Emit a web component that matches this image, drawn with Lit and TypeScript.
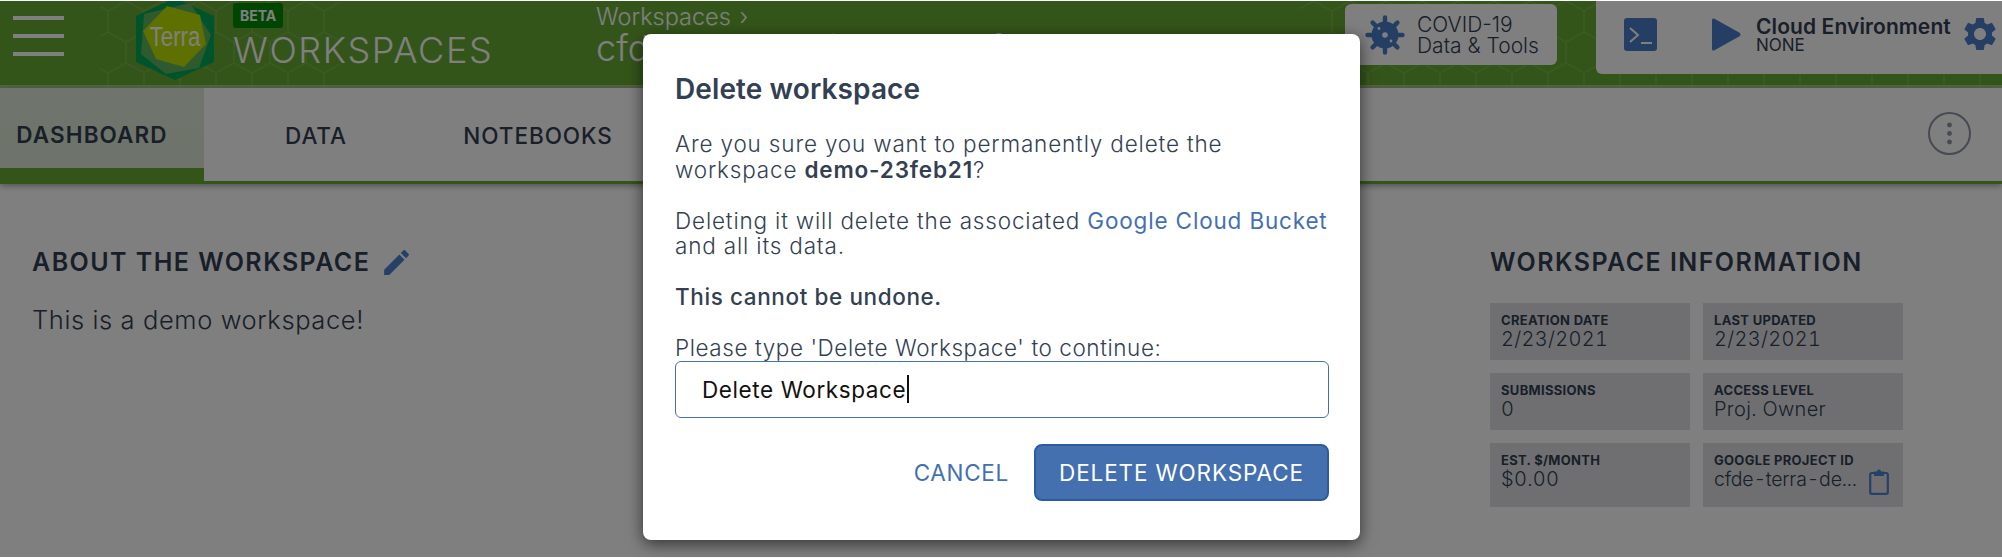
import { LitElement, css, html, svg } from "lit";
import { customElement } from "lit/decorators.js";

const tiles = [
  { label: "CREATION DATE", value: "2/23/2021" },
  { label: "LAST UPDATED", value: "2/23/2021" },
  { label: "SUBMISSIONS", value: "0" },
  { label: "ACCESS LEVEL", value: "Proj. Owner" },
  { label: "EST. $/MONTH", value: "$0.00" },
  { label: "GOOGLE PROJECT ID", value: "cfde-terra-de...", copy: true },
];

const gear = svg`<path d="M19.14 12.94c.04-.3.06-.61.06-.94 0-.32-.02-.64-.07-.94l2.03-1.58c.18-.14.23-.41.12-.61l-1.92-3.32c-.12-.22-.37-.29-.59-.22l-2.39.96c-.5-.38-1.03-.7-1.62-.94l-.36-2.54c-.04-.24-.24-.41-.48-.41h-3.84c-.24 0-.43.17-.47.41l-.36 2.54c-.59.24-1.13.57-1.62.94l-2.39-.96c-.22-.08-.47 0-.59.22L2.74 8.87c-.12.21-.08.47.12.61l2.03 1.58c-.05.3-.09.63-.09.94s.02.64.07.94l-2.03 1.58c-.18.14-.23.41-.12.61l1.92 3.32c.12.22.37.29.59.22l2.39-.96c.5.38 1.03.7 1.62.94l.36 2.54c.05.24.24.41.48.41h3.84c.24 0 .44-.17.47-.41l.36-2.54c.59-.24 1.13-.56 1.62-.94l2.39.96c.22.08.47 0 .59-.22l1.92-3.32c.12-.22.07-.47-.12-.61l-2.01-1.58zM12 15.6c-1.98 0-3.6-1.62-3.6-3.6s1.62-3.6 3.6-3.6 3.6 1.62 3.6 3.6-1.62 3.6-3.6 3.6z"/>`;

const hexPattern = svg`
  <defs>
    <pattern id="hex" width="36" height="62" patternUnits="userSpaceOnUse">
      <path d="M18 0 L36 10 V31 L18 41 L0 31 V10 Z M18 41 V62" fill="none" stroke="#fff" stroke-opacity="0.12" stroke-width="1.4"/>
    </pattern>
  </defs>
  <rect x="100" y="0" width="240" height="85" fill="url(#hex)"/>
  <rect x="1300" y="0" width="702" height="85" fill="url(#hex)"/>
`;

@customElement("app-root")
export class AppRoot extends LitElement {
  render() {
    return html`
      <div class="page">
        <header class="header">
          <svg class="pattern" width="2002" height="85">${hexPattern}</svg>
          <div class="menu"><span></span><span></span><span></span></div>
          <svg class="logo" width="78" height="80" viewBox="136 -1 78 80">
            <polygon points="175,-4 214,14 214,60 175,78 136,60 136,14" fill="#00a858"/>
            <polygon points="190,1 211,33 199,66 166,72 141,52 144,12" fill="#5fb25c"/>
            <polygon points="167,4 200,13 206,42 184,65 156,57 143,29" fill="#bce000"/>
            <text x="175" y="44" text-anchor="middle" class="logo-text" textLength="51" lengthAdjust="spacingAndGlyphs">Terra</text>
          </svg>
          <div class="brand">
            <span class="beta">BETA</span>
            <span class="title">WORKSPACES</span>
          </div>
          <div class="crumbs">
            <div class="crumb-top">Workspaces <span class="chev">›</span></div>
            <div class="crumb-name">cfde-terra-de/demo-23feb21</div>
          </div>
          <a class="covid">
            <svg width="40" height="40" viewBox="0 0 40 40" class="virus">
              <g stroke="#4a7cc8" stroke-width="4.4" stroke-linecap="round">
                <path d="M20 2.5V37.5M2.5 20H37.5M7.6 7.6L32.4 32.4M32.4 7.6L7.6 32.4"/>
              </g>
              <circle cx="20" cy="20" r="13.5" fill="#4a7cc8"/>
              <circle cx="20" cy="20" r="2.8" fill="#fff"/>
              <circle cx="14" cy="13.5" r="1.4" fill="#fff"/>
              <circle cx="26" cy="26" r="1.4" fill="#fff"/>
            </svg>
            <span class="covid-text">COVID-19<br />Data &amp; Tools</span>
          </a>
          <div class="cloud">
            <svg class="term" width="33" height="33" viewBox="0 0 33 33">
              <rect width="33" height="33" rx="3" fill="#4a7cc8"/>
              <path d="M6 10L14 17L6 24" fill="none" stroke="#fff" stroke-width="2"/>
              <path d="M17 25H28" stroke="#fff" stroke-width="2"/>
            </svg>
            <svg class="play" width="29" height="33" viewBox="0 0 29 33">
              <path d="M2 0.5 L28 15 Q29 16.5 28 18 L2 32.5 Q0 33 0 31 V2 Q0 0 2 0.5Z" fill="#4a7cc8"/>
            </svg>
            <div class="cloud-text">
              <div class="cloud-name">Cloud Environment</div>
              <div class="cloud-state">NONE</div>
            </div>
            <svg class="cog" width="40" height="40" viewBox="0 0 24 24" fill="#4a7cc8">${gear}</svg>
          </div>
        </header>

        <nav class="tabs">
          <a class="tab active">DASHBOARD</a>
          <a class="tab">DATA</a>
          <a class="tab">NOTEBOOKS</a>
          <span class="grow"></span>
          <svg class="kebab" width="43" height="43" viewBox="0 0 43 43">
            <circle cx="21.5" cy="21.5" r="20.5" fill="none" stroke="#8c94a4" stroke-width="2"/>
            <circle cx="21.5" cy="13" r="2.4" fill="#8c94a4"/>
            <circle cx="21.5" cy="21.5" r="2.4" fill="#8c94a4"/>
            <circle cx="21.5" cy="30" r="2.4" fill="#8c94a4"/>
          </svg>
        </nav>

        <main class="main">
          <section class="about">
            <h2 class="heading">
              ABOUT THE WORKSPACE
              <svg width="33" height="33" viewBox="0 0 24 24" fill="#4f82cc">
                <path d="M3 17.25V21h3.75L17.81 9.94l-3.75-3.75L3 17.25zM20.71 7.04c.39-.39.39-1.02 0-1.41l-2.34-2.34c-.39-.39-1.02-.39-1.41 0l-1.83 1.83 3.75 3.75 1.83-1.83z"/>
              </svg>
            </h2>
            <p class="desc">This is a demo workspace!</p>
          </section>
          <aside class="info">
            <h2 class="heading">WORKSPACE INFORMATION</h2>
            <div class="tiles">
              ${tiles.map(
                (t) => html`
                  <div class="tile">
                    <div class="tile-label">${t.label}</div>
                    <div class="tile-value ${t.copy ? "short" : ""}">${t.value}</div>
                    ${t.copy
                      ? html`<svg class="clip" width="20" height="26" viewBox="0 0 20 26">
                          <rect x="1.2" y="4" width="17.6" height="20.8" rx="1.5" fill="none" stroke="#4f82cc" stroke-width="2.2"/>
                          <path d="M5 2.5H8A2 2 0 0 1 12 2.5H15V7H5Z" fill="#4f82cc"/>
                        </svg>`
                      : ""}
                  </div>
                `
              )}
            </div>
          </aside>
        </main>

        <div class="overlay"></div>

        <div class="modal">
          <div class="modal-title">Delete workspace</div>
          <p class="line">
            Are you sure you want to permanently delete the<br />
            workspace <b>demo-23feb21</b>?
          </p>
          <p class="line gap">
            Deleting it will delete the associated
            <a class="link">Google Cloud Bucket</a><br />
            and all its data.
          </p>
          <p class="line gap strong">This cannot be undone.</p>
          <p class="line gap prompt">Please type 'Delete Workspace' to continue:</p>
          <div class="input">Delete Workspace<span class="caret"></span></div>
          <div class="actions">
            <a class="cancel">CANCEL</a>
            <a class="delete">DELETE WORKSPACE</a>
          </div>
        </div>
      </div>
    `;
  }

  static styles = css`
    :host {
      display: block;
      font-family: Inter, "Noto Sans", sans-serif;
      color: #333f52;
    }

    .page {
      position: relative;
      height: 557px;
      padding-top: 1px;
      background: #fff;
      overflow: hidden;
    }

    .header {
      position: relative;
      display: flex;
      align-items: flex-start;
      height: 84px;
      background: #68ab34;
      border-bottom: 3px solid #a5c98c;
    }

    .pattern {
      position: absolute;
      left: 0;
      top: 0;
    }

    .menu {
      position: relative;
      display: flex;
      flex-direction: column;
      gap: 14px;
      width: 51px;
      margin: 15px 0 0 13px;
    }

    .menu span {
      height: 4px;
      background: #fff;
    }

    .logo {
      position: relative;
      margin-left: 72px;
      flex: none;
      overflow: hidden;
    }

    .logo-text {
      font: 400 27px "Liberation Sans", sans-serif;
      fill: #fff;
    }

    .brand {
      position: relative;
      display: flex;
      flex-direction: column;
      align-items: flex-start;
      margin: 2px 0 0 19px;
      width: 363px;
    }

    .beta {
      background: #008c00;
      color: #fff;
      font-size: 14px;
      font-weight: 700;
      line-height: 25px;
      padding: 0 7px;
      border-radius: 3px;
    }

    .title {
      color: #fff;
      font-size: 36px;
      font-weight: 300;
      letter-spacing: 1.6px;
      line-height: 44px;
    }

    .crumbs {
      position: relative;
      color: #fff;
      width: 749px;
      font-weight: 300;
      white-space: nowrap;
    }

    .crumb-top {
      font-size: 23.5px;
      line-height: 30px;
      margin-top: 1px;
    }

    .chev {
      margin-left: 2px;
    }

    .crumb-name {
      font-size: 36px;
      line-height: 32px;
    }

    .covid {
      position: relative;
      display: flex;
      align-items: center;
      gap: 12px;
      width: 212px;
      height: 61px;
      margin-top: 3px;
      padding-left: 20px;
      box-sizing: border-box;
      background: #fff;
      border-radius: 6px;
      font-size: 21px;
      line-height: 21px;
      font-weight: 300;
    }

    .virus {
      flex: none;
    }

    .cloud {
      position: absolute;
      left: 1596px;
      top: -1px;
      right: 0;
      height: 74px;
      display: flex;
      align-items: flex-start;
      background: #fff;
      border-radius: 0 0 0 6px;
    }

    .term {
      margin: 18px 0 0 28px;
      flex: none;
    }

    .play {
      margin: 18px 0 0 55px;
      flex: none;
    }

    .cloud-text {
      margin: 17px 0 0 15px;
    }

    .cloud-name {
      font-size: 21px;
      font-weight: 600;
      line-height: 20px;
      letter-spacing: 0.1px;
      white-space: nowrap;
    }

    .cloud-state {
      font-size: 17px;
      line-height: 16px;
      font-weight: 400;
    }

    .cog {
      margin: 14px 0 0 9px;
      flex: none;
    }

    .tabs {
      display: flex;
      align-items: center;
      height: 93px;
      background: #fff;
      border-bottom: 3px solid #68ab34;
      box-shadow: 0 2px 6px rgba(0, 0, 0, 0.35);
      position: relative;
    }

    .tab {
      display: flex;
      align-items: center;
      justify-content: center;
      height: 93px;
      width: 222px;
      padding-top: 1px;
      font-size: 22.5px;
      font-weight: 500;
      letter-spacing: 0.95px;
      box-sizing: border-box;
    }

    .tab.active {
      width: 204px;
      margin-right: 1px;
      height: 96px;
      padding: 13px 20px 0 0;
      font-weight: 600;
      letter-spacing: 1.1px;
      background: linear-gradient(#dfead9, #dde8d6);
      border-bottom: 16px solid #68ab34;
      align-self: flex-start;
    }

    .grow {
      flex: 1;
    }

    .kebab {
      margin-right: 31px;
      margin-top: -3px;
    }

    .main {
      display: flex;
      justify-content: space-between;
      padding: 63px 0 0 32px;
    }

    .heading {
      display: flex;
      align-items: center;
      gap: 10px;
      margin: 0;
      height: 30px;
      font-size: 25px;
      font-weight: 600;
      letter-spacing: 1.45px;
      white-space: nowrap;
    }

    .desc {
      margin: 28px 0 0;
      font-size: 25.5px;
      line-height: 30px;
      font-weight: 300;
      letter-spacing: 0.6px;
    }

    .info {
      width: 512px;
    }

    .tiles {
      display: grid;
      grid-template-columns: 200px 200px;
      grid-template-rows: 57px 57px 64px;
      gap: 13px;
      margin-top: 26px;
    }

    .tile {
      position: relative;
      background: #dedfe5;
      padding: 8px 11px;
    }

    .tile-label {
      font-size: 13px;
      font-weight: 700;
      line-height: 18px;
      letter-spacing: 0.3px;
      white-space: nowrap;
    }

    .tile-value {
      font-size: 20px;
      font-weight: 300;
      line-height: 21px;
      letter-spacing: 0.3px;
      font-variant-numeric: tabular-nums;
      white-space: nowrap;
    }

    .tile-value.short {
      font-size: 19.5px;
      letter-spacing: -0.2px;
    }

    .clip {
      position: absolute;
      left: 166px;
      top: 26px;
    }

    .overlay {
      position: absolute;
      inset: 1px 0 1px 0;
      background: rgba(0, 0, 0, 0.5);
    }

    .modal {
      position: absolute;
      left: 643px;
      top: 34px;
      width: 717px;
      box-sizing: border-box;
      padding: 39px 31px 39px 32px;
      background: #fff;
      border-radius: 8px;
      box-shadow: 0 4px 16px rgba(0, 0, 0, 0.6);
    }

    .modal-title {
      font-size: 28px;
      font-weight: 600;
      line-height: 32px;
      letter-spacing: 0.1px;
      margin-bottom: 26px;
    }

    .line {
      margin: 0;
      font-size: 22.5px;
      line-height: 25.5px;
      font-weight: 300;
      letter-spacing: 0.83px;
      white-space: nowrap;
    }

    .line.gap {
      margin-top: 25.5px;
    }

    .line b {
      font-weight: 600;
    }

    .line.strong {
      font-weight: 500;
      letter-spacing: 0.6px;
    }

    .line.prompt {
      letter-spacing: 0.57px;
    }

    .link {
      color: #4470b0;
      font-weight: 400;
    }

    .input {
      display: flex;
      align-items: center;
      height: 57px;
      box-sizing: border-box;
      padding-left: 26px;
      border: 1.5px solid #4470b0;
      border-radius: 6px;
      font-size: 22.5px;
      font-weight: 400;
      letter-spacing: 0.6px;
      color: #111;
    }

    .caret {
      width: 1.5px;
      height: 28px;
      margin-left: 1px;
      background: #111;
    }

    .actions {
      display: flex;
      justify-content: flex-end;
      align-items: center;
      gap: 25px;
      margin-top: 26px;
    }

    .cancel {
      color: #4470b0;
      font-size: 22.5px;
      font-weight: 400;
      letter-spacing: 0.7px;
    }

    .delete {
      display: flex;
      align-items: center;
      justify-content: center;
      width: 295px;
      height: 57px;
      box-sizing: border-box;
      background: #4470b0;
      border: 2px solid #2c5c9e;
      border-radius: 8px;
      color: #fff;
      font-size: 22.5px;
      font-weight: 400;
      letter-spacing: 0.86px;
    }
  `;
}
